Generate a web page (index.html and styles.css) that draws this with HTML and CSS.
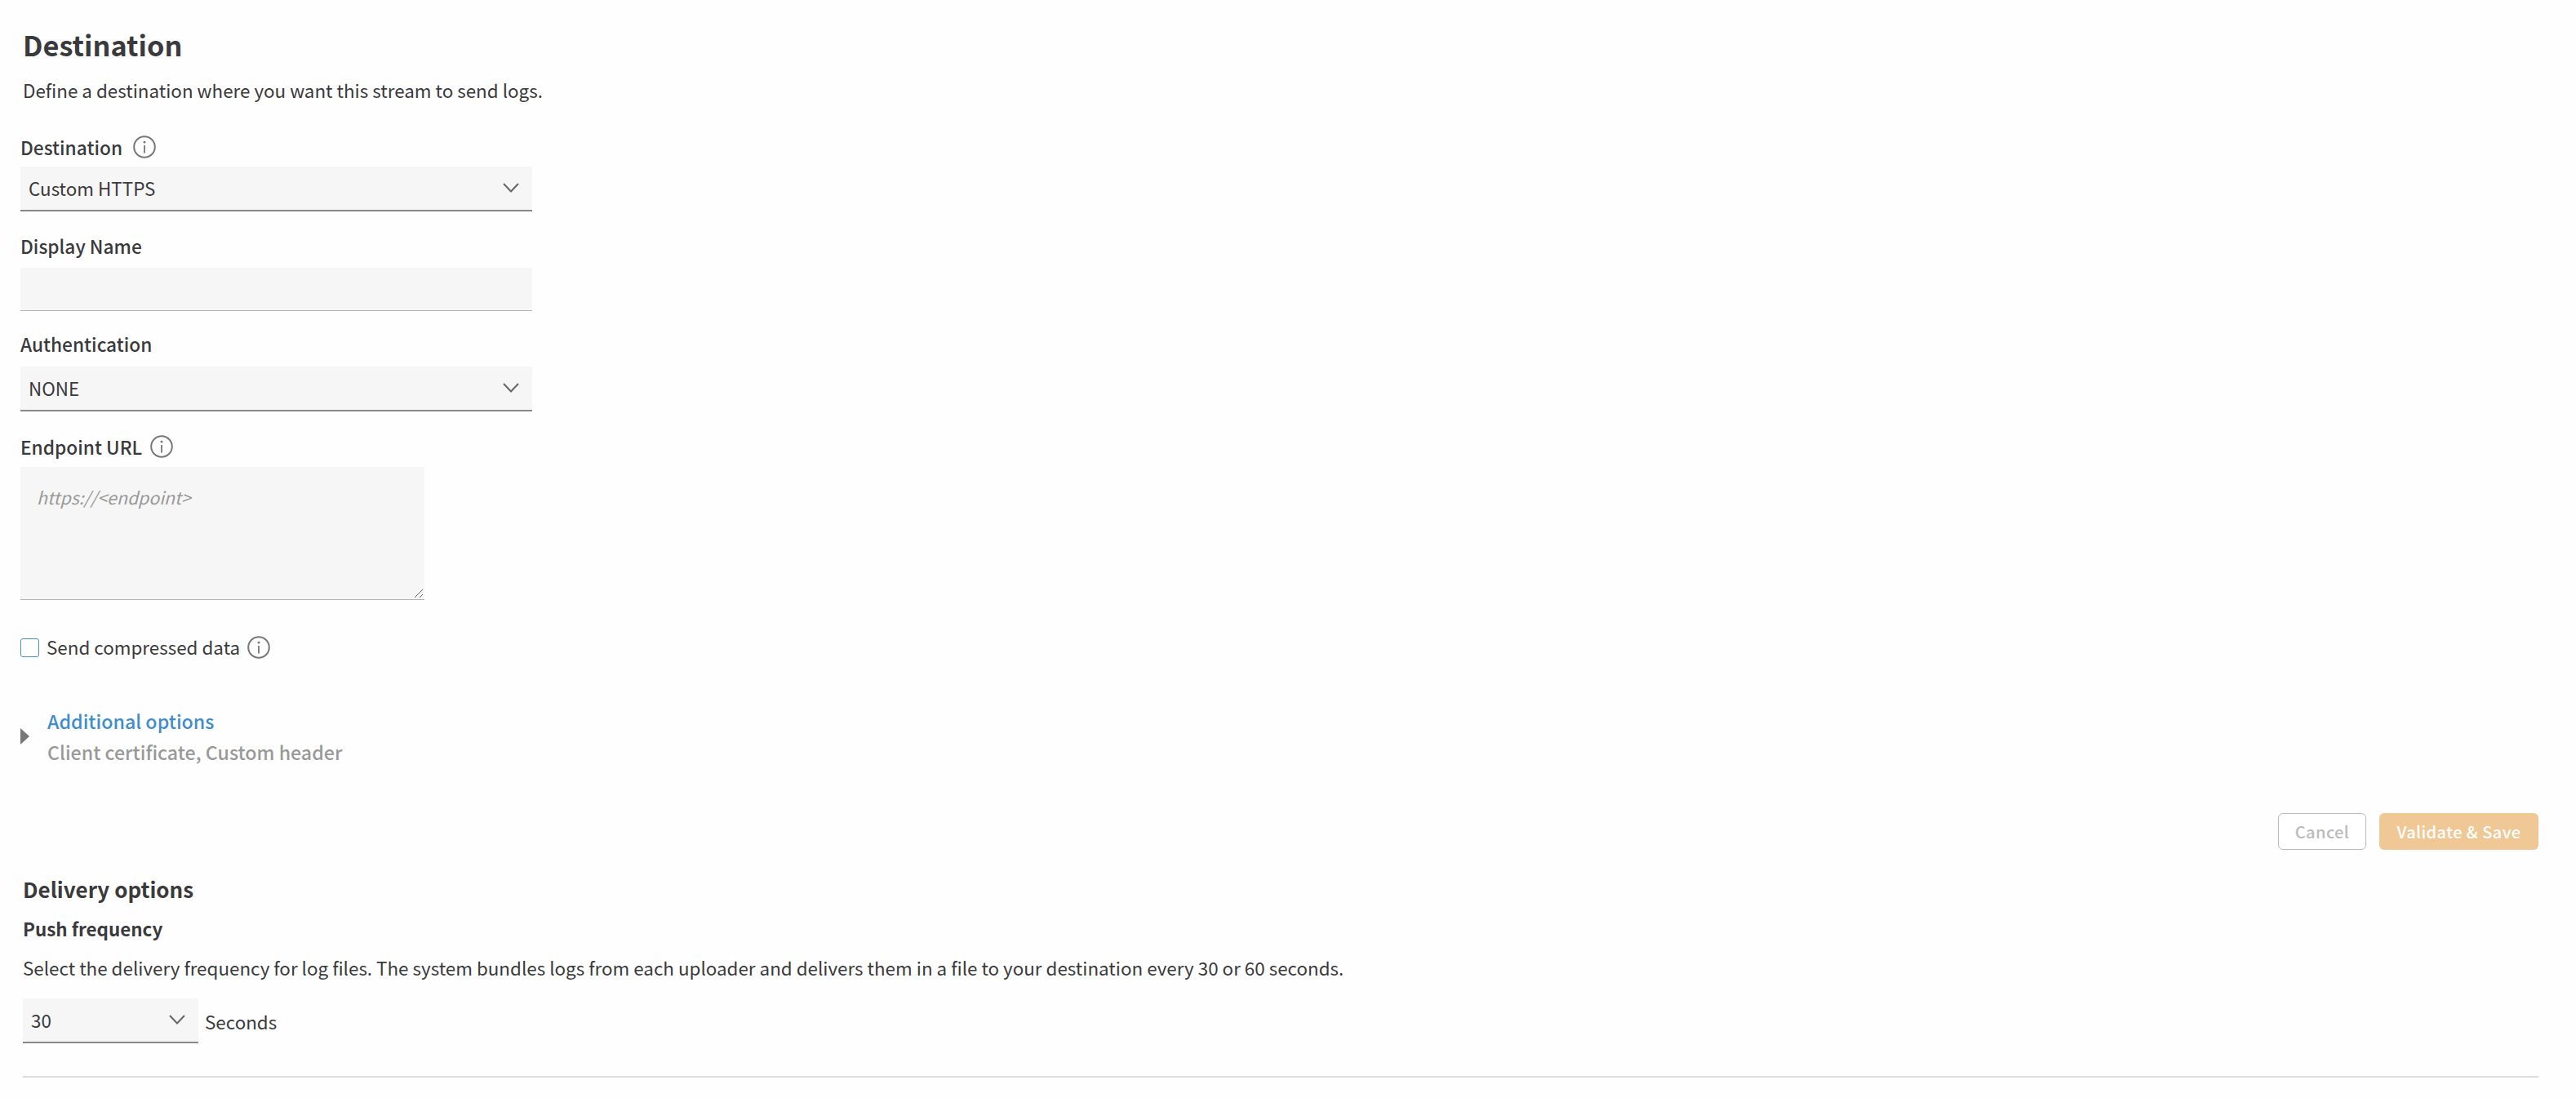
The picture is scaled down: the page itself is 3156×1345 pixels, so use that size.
FILE: index.html
```html
<!DOCTYPE html>
<html lang="en">
<head>
    <meta charset="UTF-8">
    <title>Destination</title>
    <link rel="stylesheet" href="styles.css">
</head>
<body>
    <svg width="0" height="0" class="sprites">
        <symbol id="info" viewBox="0 0 28 28">
            <circle cx="14" cy="14" r="12.8" fill="none" stroke="#777" stroke-width="2"/>
            <circle cx="14" cy="8.2" r="1.4" fill="#777"/>
            <path d="M14 12v9.5" stroke="#777" stroke-width="1.8" fill="none"/>
        </symbol>
        <symbol id="chevron" viewBox="0 0 20 12">
            <path d="M1 1l9 9.5L19 1" stroke="#666" stroke-width="2" fill="none"/>
        </symbol>
    </svg>

    <section class="destination">
        <h1>Destination</h1>
        <p class="intro">Define a destination where you want this stream to send logs.</p>

        <div class="field first">
            <label class="label">Destination <svg class="info"><use href="#info"/></svg></label>
            <div class="select wide">
                <span>Custom HTTPS</span>
                <svg class="chevron"><use href="#chevron"/></svg>
            </div>
        </div>

        <div class="field name-field">
            <label class="label" for="displayName">Display Name</label>
            <input type="text" id="displayName" class="text-input">
        </div>

        <div class="field auth-field">
            <label class="label">Authentication</label>
            <div class="select wide">
                <span>NONE</span>
                <svg class="chevron"><use href="#chevron"/></svg>
            </div>
        </div>

        <div class="field url-field">
            <label class="label" for="endpoint">Endpoint URL <svg class="info"><use href="#info"/></svg></label>
            <div class="area-wrap">
                <textarea id="endpoint" class="text-area" placeholder="https://<endpoint>"></textarea>
                <svg class="grip" width="12" height="12" viewBox="0 0 12 12">
                    <path d="M1 11L11 1M7 11l4-4" stroke="#666" stroke-width="1" fill="none"/>
                </svg>
            </div>
        </div>

        <div class="compress">
            <input type="checkbox" class="check-input" id="compress">
            <label for="compress" class="check-label">Send compressed data</label>
            <svg class="info"><use href="#info"/></svg>
        </div>

        <div class="additional">
            <span class="arrow"></span>
            <div>
                <a class="additional-link">Additional options</a>
                <div class="additional-sub">Client certificate, Custom header</div>
            </div>
        </div>

        <div class="actions">
            <button class="btn btn-cancel" disabled>Cancel</button>
            <button class="btn btn-save" disabled>Validate &amp; Save</button>
        </div>
    </section>

    <section class="delivery">
        <h2>Delivery options</h2>
        <h3>Push frequency</h3>
        <p class="delivery-text">Select the delivery frequency for log files. The system bundles logs from each uploader and delivers them in a file to your destination every 30 or 60 seconds.</p>
        <div class="frequency">
            <div class="select small">
                <span>30</span>
                <svg class="chevron"><use href="#chevron"/></svg>
            </div>
            <span class="unit">Seconds</span>
        </div>
    </section>
</body>
</html>
```

FILE: styles.css
```css
body {
    margin: 0;
    padding: 0 46px 0 25px;
    font-family: "Noto Sans CJK JP", "Source Sans Pro", sans-serif;
    font-size: 22.4px;
    color: #3a3a3c;
    background-color: #fefefe;
}

.sprites {
    position: absolute;
}

h1 {
    margin: 0 0 0 3px;
    padding-top: 31px;
    font-size: 34.3px;
    line-height: 46px;
    font-weight: 600;
}

.intro {
    margin: 16px 0 0 3px;
    line-height: 34px;
}

.field.first {
    margin-top: 36px;
}

.label {
    display: flex;
    align-items: center;
    gap: 10px;
    height: 34px;
    font-size: 22.7px;
    font-weight: 500;
}

.first .info {
    margin-left: 3px;
}

.info {
    width: 28px;
    height: 28px;
    flex: none;
}

.select {
    display: flex;
    align-items: center;
    justify-content: space-between;
    box-sizing: border-box;
    background-color: #f6f6f6;
    border-bottom: 2px solid #888;
}

.select.wide {
    width: 627px;
    height: 55px;
    margin-top: 7px;
    padding: 0 16px 2px 10px;
}

.auth-field .select.wide {
    margin-top: 11px;
}

.select.small {
    width: 215px;
    height: 55px;
    padding: 0 16px 2px 10px;
}

.chevron {
    width: 20px;
    height: 12px;
}

.name-field {
    margin-top: 25px;
}

.text-input {
    display: block;
    box-sizing: border-box;
    width: 627px;
    height: 53px;
    margin-top: 10px;
    border: 0;
    border-bottom: 1px solid #b5b3b3;
    background-color: #f6f6f6;
}

.auth-field {
    margin-top: 23px;
}

.url-field {
    margin-top: 26px;
}

.area-wrap {
    position: relative;
    width: 495px;
    margin-top: 8px;
}

.text-area {
    display: block;
    box-sizing: border-box;
    width: 495px;
    height: 163px;
    padding: 20px;
    border: 0;
    border-bottom: 1px solid #b5b3b3;
    background-color: #f6f6f6;
    font-family: inherit;
    font-size: 21.3px;
    line-height: 34px;
    resize: none;
}

.text-area::placeholder {
    color: #999;
    font-style: italic;
}

.grip {
    position: absolute;
    right: 1px;
    bottom: 2px;
}

.compress {
    display: flex;
    align-items: center;
    height: 34px;
    margin-top: 41px;
}

.check-input {
    appearance: none;
    box-sizing: border-box;
    width: 23px;
    height: 23px;
    margin: 0 9px 0 0;
    border: 1px solid #4a90c8;
    border-radius: 3px;
    background-color: #fff;
}

.check-label {
    margin: 0 9px 2px 0;
}

.additional {
    display: flex;
    align-items: center;
    gap: 22px;
    margin-top: 54px;
}

.arrow {
    width: 0;
    height: 0;
    border-style: solid;
    border-width: 10px 0 10px 11px;
    border-color: transparent transparent transparent #777;
}

.additional-link {
    display: block;
    font-size: 23.2px;
    line-height: 38px;
    color: #3f8dcb;
    font-weight: 500;
}

.additional-sub {
    font-size: 23.2px;
    line-height: 38px;
    color: #999;
    font-weight: 500;
}

.actions {
    display: flex;
    justify-content: flex-end;
    gap: 16px;
    margin-top: 56px;
}

.btn {
    box-sizing: border-box;
    height: 45px;
    border-radius: 6px;
    font-family: inherit;
    font-size: 20px;
    font-weight: 500;
    letter-spacing: 0.4px;
    padding: 0;
}

.btn-cancel {
    width: 108px;
    border: 1px solid #bbb;
    background-color: #fff;
    color: #bbb;
}

.btn-save {
    width: 195px;
    border: 0;
    background-color: #f0c896;
    color: #fff;
}

.delivery {
    margin-left: 3px;
}

.delivery h2 {
    margin: 28px 0 0;
    font-size: 26px;
    line-height: 40px;
    font-weight: 700;
}

.delivery h3 {
    margin: 11px 0 0;
    font-size: 22.4px;
    line-height: 34px;
    font-weight: 700;
}

.delivery-text {
    margin: 14px 0 0;
    line-height: 34px;
}

.frequency {
    display: flex;
    align-items: center;
    gap: 8px;
    margin-top: 21px;
    padding-bottom: 40px;
    border-bottom: 2px solid #dcdcdc;
}
```
